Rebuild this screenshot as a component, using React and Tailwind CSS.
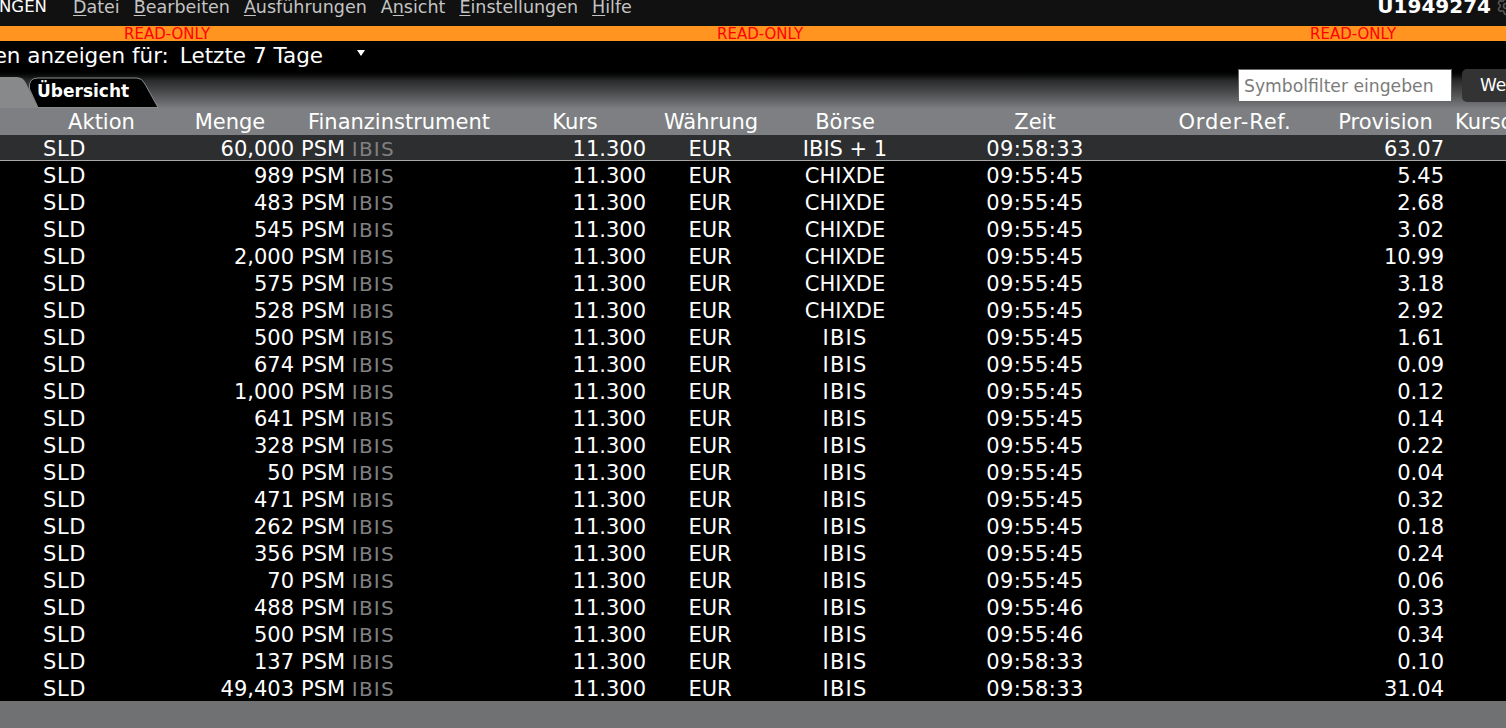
import React from 'react';
import { Settings } from 'lucide-react';

const rows = [
  ['60,000', 'IBIS + 1', '09:58:33', '63.07'],
  ['989', 'CHIXDE', '09:55:45', '5.45'],
  ['483', 'CHIXDE', '09:55:45', '2.68'],
  ['545', 'CHIXDE', '09:55:45', '3.02'],
  ['2,000', 'CHIXDE', '09:55:45', '10.99'],
  ['575', 'CHIXDE', '09:55:45', '3.18'],
  ['528', 'CHIXDE', '09:55:45', '2.92'],
  ['500', 'IBIS', '09:55:45', '1.61'],
  ['674', 'IBIS', '09:55:45', '0.09'],
  ['1,000', 'IBIS', '09:55:45', '0.12'],
  ['641', 'IBIS', '09:55:45', '0.14'],
  ['328', 'IBIS', '09:55:45', '0.22'],
  ['50', 'IBIS', '09:55:45', '0.04'],
  ['471', 'IBIS', '09:55:45', '0.32'],
  ['262', 'IBIS', '09:55:45', '0.18'],
  ['356', 'IBIS', '09:55:45', '0.24'],
  ['70', 'IBIS', '09:55:45', '0.06'],
  ['488', 'IBIS', '09:55:46', '0.33'],
  ['500', 'IBIS', '09:55:46', '0.34'],
  ['137', 'IBIS', '09:58:33', '0.10'],
  ['49,403', 'IBIS', '09:58:33', '31.04'],
];

function Mnemonic({ first = '', u, rest }) {
  return (
    <span>
      {first}
      <span className="underline underline-offset-2">{u}</span>
      {rest}
    </span>
  );
}

function ReadOnly({ className }) {
  return <span className={`text-[15px] leading-[17px] text-[#f00] ${className}`}>READ-ONLY</span>;
}

export default function App() {
  return (
    <div className="h-[728px] w-[1506px] overflow-hidden bg-black font-['DejaVu_Sans',sans-serif] text-white">
      {/* Menu bar */}
      <div className="flex h-[26px] items-start overflow-hidden bg-[#111111] text-[#c4c4c4]">
        <div className="ml-[-1px] w-[74px] shrink-0 text-[16.5px] leading-[14px] text-white">NGEN</div>
        <div className="flex shrink-0 gap-[14px] text-[17.5px] leading-[15px]">
          <Mnemonic u="D" rest="atei" />
          <Mnemonic u="B" rest="earbeiten" />
          <Mnemonic u="A" rest="usführungen" />
          <Mnemonic first="A" u="n" rest="sicht" />
          <Mnemonic u="E" rest="instellungen" />
          <Mnemonic u="H" rest="ilfe" />
        </div>
        <div className="ml-auto mr-[-10px] flex shrink-0 items-start gap-[5px]">
          <span className="text-[20px] font-bold leading-[13px] text-white">U1949274</span>
          <Settings size={20} className="mt-[-4px] text-[#555555]" />
        </div>
      </div>

      {/* Read-only banner */}
      <div className="flex h-[15px] overflow-hidden bg-[#ff9420]">
        <ReadOnly className="ml-[124px] w-[593px]" />
        <ReadOnly className="w-[593px]" />
        <ReadOnly />
      </div>

      {/* Filter line */}
      <div className="flex h-[28px] items-center overflow-hidden pt-[3px]">
        <span className="ml-[-130px] shrink-0 text-[21.5px]">Transaktionen anzeigen für:</span>
        <span className="ml-[11px] w-[177px] shrink-0 text-[21.5px]">Letzte 7 Tage</span>
        <span className="mb-[8px] h-0 w-0 shrink-0 border-x-[4.5px] border-t-[6px] border-x-transparent border-t-white" />
      </div>

      {/* Tab strip */}
      <div className="flex h-[39px] bg-gradient-to-b from-black via-[#2a2b2c] via-30% to-[#7a7c7f]">
        <svg className="mt-[8px] shrink-0" width="38" height="31" viewBox="0 0 38 31">
          <path d="M0 0 L17 0 Q23 0 26 6 L38 31 L0 31 Z" fill="#88898b" />
        </svg>
        <div className="relative ml-[-9px] mt-[8px] h-[31px] w-[130px] shrink-0">
          <svg className="absolute inset-0" width="130" height="31" viewBox="0 0 130 31">
            <path d="M9 30.5 L0.5 12 Q-1 1 9 1 L108 1 Q113 1 116 7 L129 30.5 Z" fill="#000" stroke="#8a8b8d" strokeWidth="1" />
          </svg>
          <span className="absolute left-[8px] top-[2px] text-[17px] font-bold">Übersicht</span>
        </div>
        <input
          readOnly
          placeholder="Symbolfilter eingeben"
          className="ml-[1079px] h-[33px] w-[214px] shrink-0 border border-[#666666] bg-white px-[5px] text-[17.2px] placeholder:text-[#7b7b7b]"
        />
        <div className="ml-[10px] h-[33px] w-[60px] shrink-0 rounded-[5px] bg-[#333333] pl-[18px] text-[17px] leading-[33px]">Weiter</div>
      </div>

      {/* Column header */}
      <div className="flex h-[27px] items-center whitespace-nowrap bg-[#7d7f82] pt-[2px] text-[21px] leading-[25px]">
        <div className="w-[163px] shrink-0 pl-[40px] text-center">Aktion</div>
        <div className="w-[134px] shrink-0 text-center">Menge</div>
        <div className="ml-[4px] w-[196px] shrink-0 text-center">Finanzinstrument</div>
        <div className="w-[156px] shrink-0 text-center">Kurs</div>
        <div className="w-[116px] shrink-0 text-center">Währung</div>
        <div className="w-[152px] shrink-0 text-center">Börse</div>
        <div className="w-[228px] shrink-0 text-center">Zeit</div>
        <div className="w-[172px] shrink-0 text-center tracking-[0.8px]">Order-Ref.</div>
        <div className="w-[129px] shrink-0 text-center">Provision</div>
        <div className="ml-[5px] shrink-0">Kursdifferenz</div>
      </div>

      {/* Trades */}
      <div className="h-[566px] overflow-hidden">
        {rows.map((r, i) => (
          <div
            key={i}
            className={`flex items-center text-[21px] leading-[23px] ${
              i === 0 ? 'h-[26px] border-b border-[#a8a8a8] bg-[#2d2e30] pt-[3px]' : 'h-[27px] pt-[4px]'
            }`}
          >
            <div className="w-[161px] shrink-0 pl-[43px] tracking-[0.6px]">SLD</div>
            <div className="w-[133px] shrink-0 text-right">{r[0]}</div>
            <div className="ml-[7px] w-[196px] shrink-0 whitespace-nowrap">
              PSM <span className="text-[20px] tracking-[1.2px] text-[#808080]">IBIS</span>
            </div>
            <div className="w-[149px] shrink-0 text-right">11.300</div>
            <div className="ml-[5px] w-[118px] shrink-0 text-center">EUR</div>
            <div className={`w-[152px] shrink-0 text-center ${r[1] === 'IBIS' ? 'tracking-[1.2px]' : ''}`}>{r[1]}</div>
            <div className="w-[228px] shrink-0 text-center tracking-[0.4px]">{r[2]}</div>
            <div className="w-[171px] shrink-0" />
            <div className="w-[124px] shrink-0 text-right">{r[3]}</div>
          </div>
        ))}
      </div>

      {/* Footer */}
      <div className="h-[27px] bg-[#707172]" />
    </div>
  );
}
